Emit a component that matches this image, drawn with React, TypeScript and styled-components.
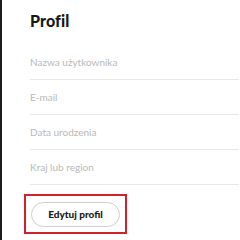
import React from "react";
import styled, { createGlobalStyle } from "styled-components";

const Global = createGlobalStyle`
  html, body { margin: 0; padding: 0; background: #ffffff; }
  body { font-family: Lato, "Noto Sans", sans-serif; }
`;

const Page = styled.div`
  box-sizing: border-box;
  width: 240px;
  height: 240px;
  border-left: 2px solid #1c1c1c;
  padding: 0 1px 0 28px;
  background: #ffffff;
  overflow: hidden;
`;

const Title = styled.h1`
  margin: 0;
  padding-top: 11px;
  height: 45px;
  box-sizing: border-box;
  font-size: 16px;
  line-height: 20px;
  font-weight: 900;
  color: #181818;
  letter-spacing: 0.1px;
`;

const Field = styled.div`
  padding: 10px 0;
  border-bottom: 1px solid #e8e8e8;
  font-size: 10px;
  line-height: 14px;
  color: #b9b9b9;
`;

const Highlight = styled.div`
  margin-top: 9px;
  margin-left: -6px;
  width: 103px;
  height: 40px;
  box-sizing: border-box;
  border: 2px solid #d4202b;
  display: flex;
  align-items: center;
  padding-left: 5px;
`;

const Button = styled.button`
  width: 89px;
  height: 25px;
  box-sizing: border-box;
  border: 1px solid #cfcfcf;
  border-radius: 13px;
  background: #ffffff;
  font-family: Lato, "Noto Sans", sans-serif;
  font-weight: 900;
  font-size: 10px;
  color: #181818;
  padding: 0;
`;

export default function App() {
  const fields = ["Nazwa użytkownika", "E-mail", "Data urodzenia", "Kraj lub region"];
  return (
    <>
      <Global />
      <Page>
        <Title>Profil</Title>
        {fields.map((f) => (
          <Field key={f}>{f}</Field>
        ))}
        <Highlight>
          <Button>Edytuj profil</Button>
        </Highlight>
      </Page>
    </>
  );
}
